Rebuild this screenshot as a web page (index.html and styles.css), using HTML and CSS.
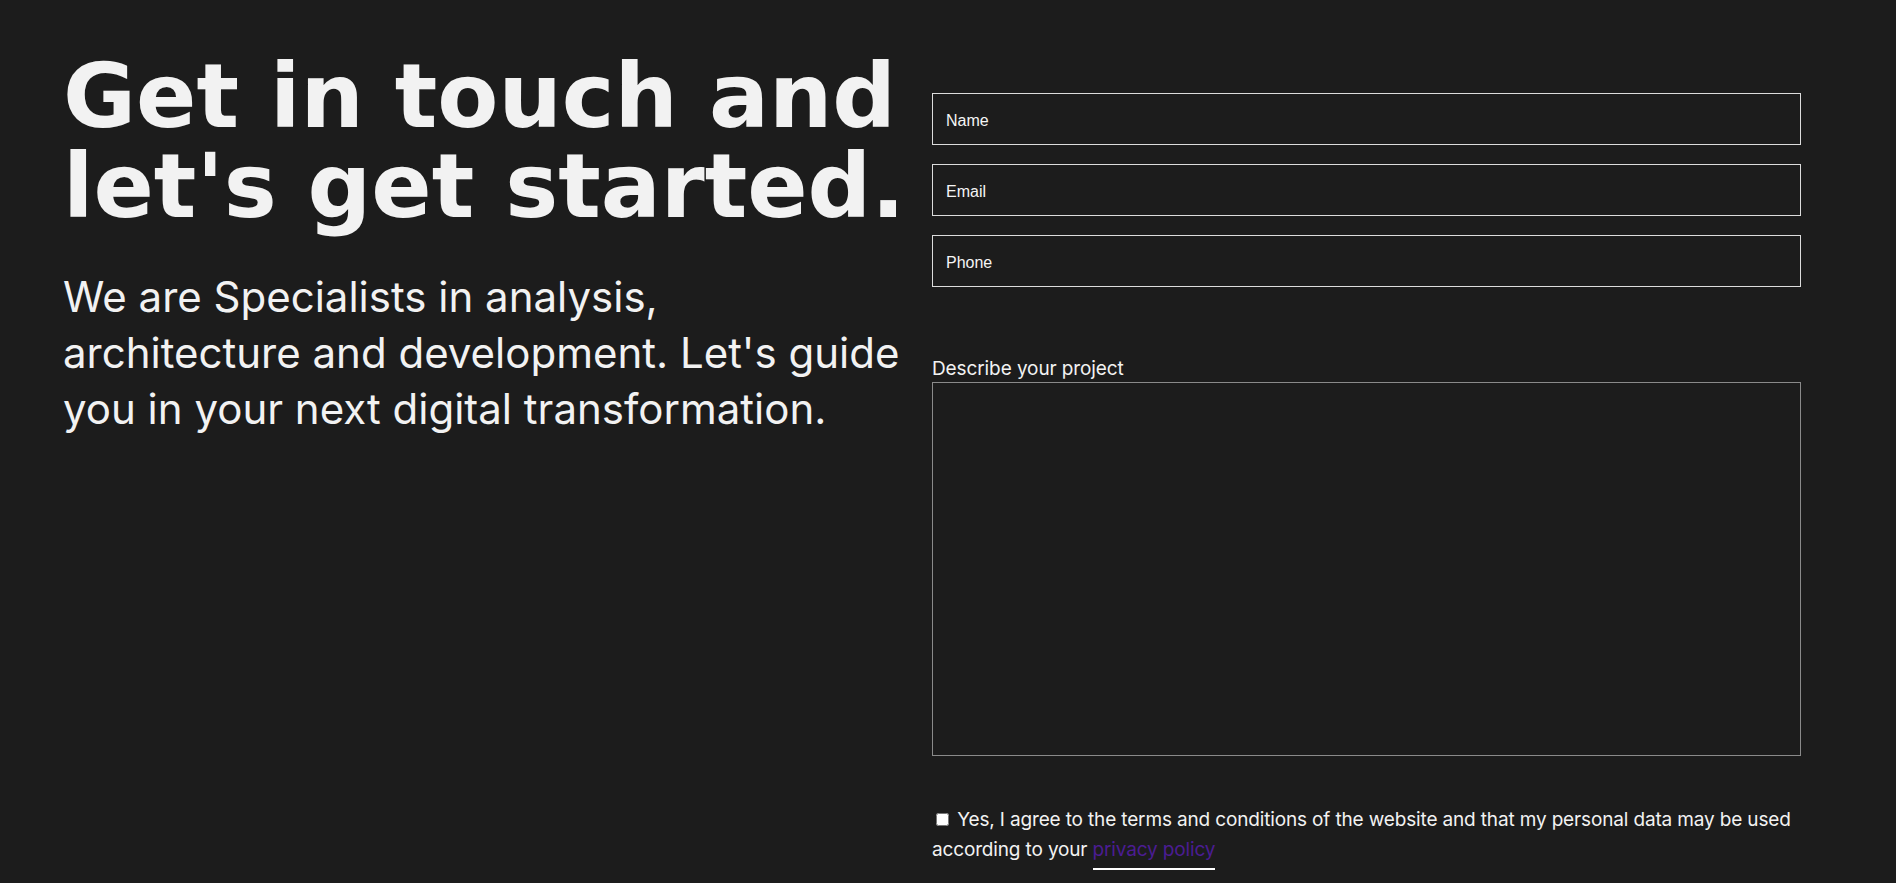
FILE: index.html
```html
<!DOCTYPE html>
<html lang="en">
<head>
<meta charset="utf-8">
<title>Contact</title>
<link rel="stylesheet" href="styles.css">
</head>
<body>
<main class="contact">
  <section class="intro">
    <h1 class="title">Get in touch and<br>let's get started.</h1>
    <p class="lead">We are Specialists in analysis,<br>architecture and development. Let's guide<br>you in your next digital transformation.</p>
  </section>
  <form class="form">
    <input class="field" type="text" placeholder="Name">
    <input class="field" type="email" placeholder="Email">
    <input class="field" type="tel" placeholder="Phone">
    <label class="label" for="project">Describe your project</label>
    <textarea class="area" id="project"></textarea>
    <p class="consent"><input class="check" type="checkbox"> Yes, I agree to the terms and conditions of the website and that my personal data may be used according to your <a class="link" href="#">privacy policy</a></p>
  </form>
</main>
</body>
</html>
```

FILE: styles.css
```css
html, body {
  margin: 0;
  padding: 0;
  background: #1c1c1c;
  color: #f2f2f2;
  height: 100%;
  overflow: hidden;
}

.contact {
  display: grid;
  grid-template-columns: 855px 869px;
  column-gap: 14px;
  padding: 51px 0 0 63px;
  align-items: start;
}

.intro {
  display: flex;
  flex-direction: column;
}

.title {
  margin: 0;
  font-family: "DejaVu Sans", sans-serif;
  font-weight: 700;
  font-size: 89px;
  line-height: 90px;
  letter-spacing: 0;
  white-space: nowrap;
  color: #f2f2f2;
}

.lead {
  margin: 38px 0 0;
  font-family: Inter, "Liberation Sans", sans-serif;
  font-size: 42px;
  line-height: 56px;
  font-weight: 400;
  letter-spacing: 0;
  white-space: nowrap;
  color: #f2f2f2;
}

.form {
  display: flex;
  flex-direction: column;
  margin-top: 42px;
}

.field {
  box-sizing: border-box;
  height: 52px;
  width: 100%;
  margin: 0 0 19px;
  padding: 4px 13px 0;
  background: transparent;
  border: 1px solid #dcdcdc;
  border-radius: 0;
  color: #f2f2f2;
  font-family: "Liberation Sans", Arial, sans-serif;
  font-size: 16px;
  outline: none;
}

.field::placeholder {
  color: #f5f5f5;
  opacity: 1;
}

.field:nth-of-type(3) {
  margin-bottom: 0;
}

.label {
  margin-top: 72px;
  font-family: Inter, "Liberation Sans", sans-serif;
  font-size: 19px;
  line-height: 20px;
  letter-spacing: -0.1px;
  color: #f2f2f2;
}

.area {
  box-sizing: border-box;
  margin-top: 3px;
  height: 374px;
  width: 100%;
  background: transparent;
  border: 1px solid #8a8a8a;
  border-radius: 0;
  resize: none;
  color: #f2f2f2;
  outline: none;
}

.consent {
  margin: 49px 0 0;
  font-family: Inter, "Liberation Sans", sans-serif;
  font-size: 19px;
  line-height: 30px;
  letter-spacing: -0.15px;
  color: #f2f2f2;
}

.check {
  margin: 3px 3px 3px 4px;
  width: 13px;
  height: 13px;
}

.link {
  color: #4b1c93;
  text-decoration: none;
  border-bottom: 2px solid #ffffff;
  padding-bottom: 7px;
}
```
